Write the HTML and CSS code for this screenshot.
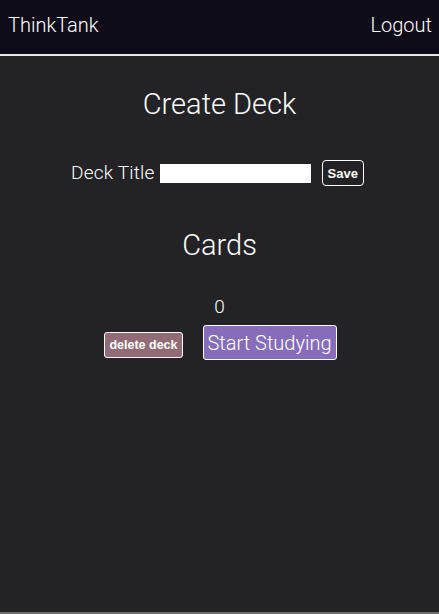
FILE: index.html
```html
<!DOCTYPE html>
<html>
<head>
<meta charset="utf-8">
<link rel="stylesheet" href="styles.css">
</head>
<body>
<div class="page">
  <header class="nav">
    <span class="brand">ThinkTank</span>
    <span class="logout">Logout</span>
  </header>
  <main class="main">
    <h1 class="heading">Create Deck</h1>
    <div class="title-row">
      <label class="label">Deck Title</label>
      <input class="title-input" type="text">
      <button class="save-btn">Save</button>
    </div>
    <h2 class="heading cards-heading">Cards</h2>
    <div class="count">0</div>
    <div class="actions">
      <button class="delete-btn">delete deck</button>
      <button class="study-btn">Start Studying</button>
    </div>
  </main>
</div>
</body>
</html>
```
FILE: styles.css
```css
html, body {
  margin: 0;
  padding: 0;
  height: 100%;
}
body {
  background: #232325;
  font-family: Roboto, "Liberation Sans", sans-serif;
  font-weight: 300;
  color: #fff;
}
.page {
  border-bottom: 2px solid #6e6e6e;
  box-sizing: border-box;
  height: 614px;
}
.nav {
  background: #0f0c1a;
  border-bottom: 2px solid #e8e8e8;
  display: flex;
  align-items: center;
  justify-content: space-between;
  padding: 0 7px 4px 8px;
  box-sizing: border-box;
  height: 56px;
  font-size: 20px;
}
.main {
  display: flex;
  flex-direction: column;
  align-items: center;
}
.heading {
  font-weight: 300;
  font-size: 29px;
  margin: 31px 0 0;
  line-height: 34px;
}
.title-row {
  display: flex;
  align-items: center;
  margin: 37px 4px 0 0;
}
.label {
  font-size: 19px;
  margin-right: 5px;
  letter-spacing: 0.2px;
}
.title-input {
  width: 151px;
  height: 19px;
  box-sizing: border-box;
  border: none;
  background: #fff;
  margin: 3px 11px 0 0;
  padding: 0;
}
.save-btn {
  font-family: "Liberation Sans", Arial, sans-serif;
  font-weight: bold;
  font-size: 13px;
  color: #fff;
  background: transparent;
  border: 1px solid #fff;
  border-radius: 4px;
  height: 26px;
  padding: 0 5px;
  margin-top: 2px;
}
.cards-heading {
  margin-top: 42px;
}
.count {
  font-size: 19px;
  margin-top: 33px;
}
.actions {
  display: flex;
  align-items: center;
  margin-top: 7px;
  margin-left: 2px;
  gap: 20px;
}
.delete-btn {
  font-family: "Liberation Sans", Arial, sans-serif;
  font-weight: bold;
  font-size: 12.5px;
  color: #fff;
  background: #926b77;
  border: 1px solid #fff;
  border-radius: 3px;
  height: 26px;
  padding: 0 4px;
  margin-top: 5px;
}
.study-btn {
  font-family: Roboto, sans-serif;
  font-weight: 300;
  font-size: 20px;
  color: #fff;
  background: #876cb9;
  border: 1px solid #fff;
  border-radius: 3px;
  height: 35px;
  padding: 0 4px;
}
```
